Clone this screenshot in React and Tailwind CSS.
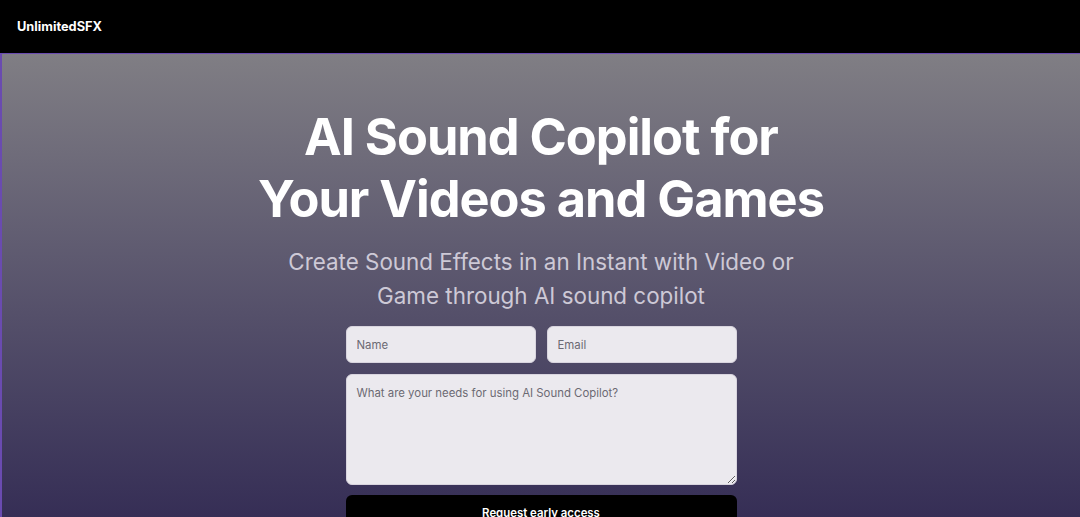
export default function App() {
  return (
    <div className="min-h-screen bg-black font-['Inter',sans-serif]">
      <header className="flex h-[53px] items-center bg-black px-[17px]">
        <span className="text-[12.8px] font-bold text-white">UnlimitedSFX</span>
      </header>

      <section className="flex min-h-[464px] flex-col items-center border-l-2 border-t border-[#6a4bb0] bg-gradient-to-b from-[#807e84] via-[#55506a] to-[#2e2550] pb-10 pt-[52px]">
        <h1 className="text-center text-[50.5px] font-bold leading-[62px] tracking-[-0.02em] text-white">
          AI Sound Copilot for
          <br />
          Your Videos and Games
        </h1>
        <p className="mt-[15px] max-w-[520px] text-center text-[22.4px] leading-[34px] text-[#cdc9d6]">
          Create Sound Effects in an Instant with Video or Game through AI sound copilot
        </p>

        <form className="mt-[13px] flex w-[391px] flex-col gap-[11px]">
          <div className="flex gap-[11px]">
            <input
              placeholder="Name"
              className="h-[37px] w-full rounded-[6px] border border-[#d8d4de] bg-[#ebe9ee] px-[10px] text-[11.4px] text-[#333] placeholder:text-[#6b6a73] outline-none"
            />
            <input
              placeholder="Email"
              className="h-[37px] w-full rounded-[6px] border border-[#d8d4de] bg-[#ebe9ee] px-[10px] text-[11.4px] text-[#333] placeholder:text-[#6b6a73] outline-none"
            />
          </div>
          <textarea
            placeholder="What are your needs for using AI Sound Copilot?"
            className="h-[111px] w-full rounded-[6px] border border-[#d8d4de] bg-[#ebe9ee] px-[10px] py-[10px] text-[11.4px] text-[#333] placeholder:text-[#6b6a73] outline-none"
          />
          <button
            type="button"
            className="mt-[-1px] h-[37px] w-full rounded-[6px] bg-black text-[11.4px] font-semibold text-white"
          >
            Request early access
          </button>
        </form>
      </section>
    </div>
  );
}
